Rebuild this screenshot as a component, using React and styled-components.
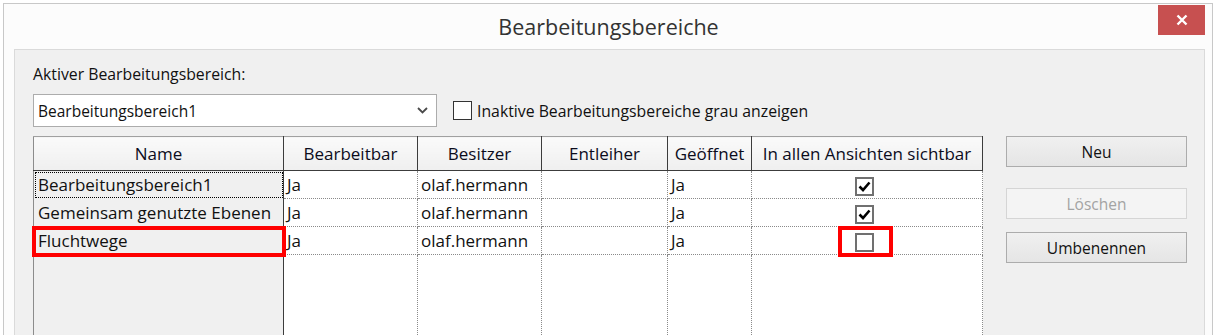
import React from 'react'
import styled, { createGlobalStyle } from 'styled-components'

const GlobalStyle = createGlobalStyle`
  html, body {
    margin: 0;
    background: #fff;
  }
  body {
    font-family: "Open Sans", "Liberation Sans", sans-serif;
    color: #111;
    overflow: hidden;
  }
`

const Window = styled.div`
  box-sizing: border-box;
  margin: 3px 1px 0 3px;
  height: 332px;
  border: 1px solid #c8c8c8;
  border-bottom: none;
  background: #fcfcfc;
  padding: 0 7px 0 10px;
  display: flex;
  flex-direction: column;
`

const TitleBar = styled.div`
  height: 45px;
  display: grid;
  grid-template-columns: 1fr auto 1fr;
  align-items: center;
`

const Title = styled.div`
  grid-column: 2;
  font-size: 21.5px;
  color: #333;
  padding-right: 2px;
`

const CloseButton = styled.div`
  grid-column: 3;
  justify-self: end;
  align-self: start;
  margin-top: 1px;
  width: 47px;
  height: 30px;
  background: #c75050;
  display: flex;
  align-items: center;
  justify-content: center;
`

const Panel = styled.div`
  flex: 1;
  border: 1px solid #dadada;
  border-bottom: none;
  background: #f0f0f0;
  padding: 14px 17px 0 18px;
  display: flex;
  gap: 24px;
  overflow: hidden;
`

const Main = styled.div`
  width: 949px;
  display: flex;
  flex-direction: column;
`

const Label = styled.div`
  font-size: 15.8px;
  line-height: 20px;
`

const ComboRow = styled.div`
  margin-top: 10px;
  display: flex;
  align-items: center;
`

const Combo = styled.div`
  box-sizing: border-box;
  width: 404px;
  height: 33px;
  background: #fff;
  border: 1px solid #acacac;
  padding: 0 8px 0 4px;
  display: flex;
  align-items: center;
  justify-content: space-between;
  font-size: 15.5px;
`

const CheckLabel = styled.label`
  margin-left: 16px;
  display: flex;
  align-items: center;
  gap: 5px;
  font-size: 15.8px;
`

const Box = styled.span`
  box-sizing: border-box;
  position: relative;
  display: inline-flex;
  align-items: center;
  justify-content: center;
  vertical-align: middle;
  width: ${({ size }) => size}px;
  height: ${({ size }) => size}px;
  background: #fff;
  border: ${({ thick }) => (thick ? '2px solid #707070' : '1px solid #333')};
`

const Table = styled.table`
  margin-top: 9px;
  width: 949px;
  table-layout: fixed;
  border-collapse: collapse;
  font-size: 17px;
`

const HeadCell = styled.th`
  height: 33px;
  padding: 0;
  font-weight: normal;
  text-align: center;
  white-space: nowrap;
  color: #0c0c1c;
  background: linear-gradient(#fafafa, #efefef);
  border-top: 1px solid #a0a0a0;
  border-bottom: 1px solid #3c3c3c;
  border-right: 1px solid #3c3c3c;
  &:first-child {
    border-left: 1px solid #8c8c8c;
  }
`

const Cell = styled.td`
  height: ${({ filler }) => (filler ? '120px' : '27px')};
  padding: ${({ center }) => (center ? '0 8px 0 3px' : '0 3px')};
  white-space: nowrap;
  background: #fff;
  border-right: 1px dotted #8a8a8a;
  border-bottom: ${({ filler }) => (filler ? 'none' : '1px dotted #8a8a8a')};
  text-align: ${({ center }) => (center ? 'center' : 'left')};
  vertical-align: ${({ filler }) => (filler ? 'top' : 'middle')};
`

const NameCell = styled.td`
  height: ${({ filler }) => (filler ? '120px' : '27px')};
  padding: 0;
  white-space: nowrap;
  background: #f0f0f0;
  border-left: 1px solid #8c8c8c;
  border-right: 1px solid #3c3c3c;
  outline: ${({ focused }) => (focused ? '1px dotted #000' : 'none')};
  outline-offset: -2px;
`

const NameText = styled.div`
  position: relative;
  height: 27px;
  padding: 0 4px;
  display: flex;
  align-items: center;
`

const Highlight = styled.span`
  position: absolute;
  top: ${({ t }) => t}px;
  left: ${({ l }) => l}px;
  right: ${({ r }) => r}px;
  bottom: ${({ b }) => b}px;
  border: 4px solid #ff0000;
  pointer-events: none;
`

const Side = styled.div`
  width: 181px;
  padding-top: 72px;
  display: flex;
  flex-direction: column;
`

const Button = styled.button`
  box-sizing: border-box;
  width: 181px;
  height: 31px;
  margin-bottom: ${({ gap }) => gap}px;
  font-family: inherit;
  font-size: 15.5px;
  color: ${({ disabled }) => (disabled ? '#a3a3a3' : '#111')};
  border: 1px solid ${({ disabled }) => (disabled ? '#d5d5d5' : '#acacac')};
  background: ${({ disabled }) =>
    disabled ? '#f4f4f4' : 'linear-gradient(#f0f0f0, #e5e5e5)'};
  padding: 0;
`

const columns = [
  { title: 'Name', width: 250 },
  { title: 'Bearbeitbar', width: 134 },
  { title: 'Besitzer', width: 124 },
  { title: 'Entleiher', width: 126 },
  { title: 'Geöffnet', width: 84 },
  { title: 'In allen Ansichten sichtbar', width: 231 }
]

const rows = [
  { name: 'Bearbeitungsbereich1', visible: true, focused: true },
  { name: 'Gemeinsam genutzte Ebenen', visible: true },
  { name: 'Fluchtwege', visible: false, marked: true }
]

const Check = () => (
  <svg width="13" height="11" viewBox="0 0 13 11">
    <path d="M1.5 5.5 L5 9 L11.5 1.5" fill="none" stroke="#000" strokeWidth="2.6" />
  </svg>
)

const App = () => (
  <>
    <GlobalStyle />
    <Window>
      <TitleBar>
        <Title>Bearbeitungsbereiche</Title>
        <CloseButton>
          <svg width="12" height="12" viewBox="0 0 12 12">
            <path d="M1.5 1.5 L10.5 10.5 M10.5 1.5 L1.5 10.5" stroke="#fff" strokeWidth="2.4" />
          </svg>
        </CloseButton>
      </TitleBar>
      <Panel>
        <Main>
          <Label>Aktiver Bearbeitungsbereich:</Label>
          <ComboRow>
            <Combo>
              <span>Bearbeitungsbereich1</span>
              <svg width="11" height="7" viewBox="0 0 11 7">
                <path d="M1 1 L5.5 5.5 L10 1" fill="none" stroke="#4a4a4a" strokeWidth="1.8" />
              </svg>
            </Combo>
            <CheckLabel>
              <Box size={19} />
              Inaktive Bearbeitungsbereiche grau anzeigen
            </CheckLabel>
          </ComboRow>
          <Table>
            <colgroup>
              {columns.map(c => (
                <col key={c.title} style={{ width: c.width }} />
              ))}
            </colgroup>
            <thead>
              <tr>
                {columns.map(c => (
                  <HeadCell key={c.title}>{c.title}</HeadCell>
                ))}
              </tr>
            </thead>
            <tbody>
              {rows.map(r => (
                <tr key={r.name}>
                  <NameCell focused={r.focused}>
                    <NameText>
                      {r.name}
                      {r.marked && <Highlight t={-1} l={-2} r={-3} b={-3} />}
                    </NameText>
                  </NameCell>
                  <Cell>Ja</Cell>
                  <Cell>olaf.hermann</Cell>
                  <Cell />
                  <Cell>Ja</Cell>
                  <Cell center>
                    <Box size={19} thick>
                      {r.visible && <Check />}
                      {r.marked && <Highlight t={-9} l={-19} r={-21} b={-7} />}
                    </Box>
                  </Cell>
                </tr>
              ))}
              <tr>
                <NameCell filler />
                <Cell filler />
                <Cell filler />
                <Cell filler />
                <Cell filler />
                <Cell filler />
              </tr>
            </tbody>
          </Table>
        </Main>
        <Side>
          <Button gap={21}>Neu</Button>
          <Button gap={13} disabled>
            Löschen
          </Button>
          <Button>Umbenennen</Button>
        </Side>
      </Panel>
    </Window>
  </>
)

export default App
